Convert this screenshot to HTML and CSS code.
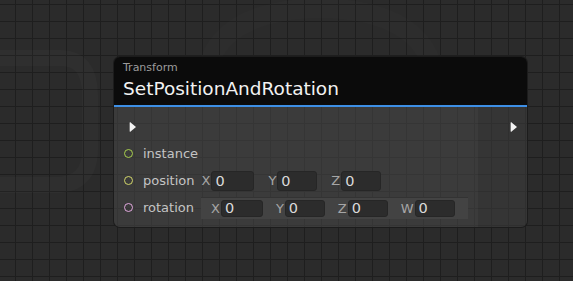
FILE: index.html
```html
<!DOCTYPE html>
<html lang="en">
<head>
    <meta charset="UTF-8">
    <title>SetPositionAndRotation</title>
    <link rel="stylesheet" href="styles.css">
</head>
<body>

<div class="canvas">
    <svg class="watermark" width="573" height="281" viewBox="0 0 573 281">
        <path d="M-20 70 Q-20 58 0 58 L60 58 Q90 58 90 95 L90 150 Q90 185 55 185 L-20 185 Z" fill="none" stroke="#ffffff" stroke-width="16" stroke-opacity="0.018"/>
        <path d="M210 60 Q230 10 320 8 Q410 10 430 60" fill="none" stroke="#ffffff" stroke-width="20" stroke-opacity="0.012"/>
    </svg>

    <div class="node">
        <div class="node-header">
            <div class="node-category">Transform</div>
            <div class="node-title">SetPositionAndRotation</div>
        </div>
        <div class="node-body">
            <div class="inputs">
                <div class="row">
                    <span class="flow-arrow"></span>
                </div>
                <div class="row">
                    <span class="port port-instance"></span>
                    <span class="label">instance</span>
                </div>
                <div class="row">
                    <span class="port port-position"></span>
                    <span class="label">position</span>
                    <div class="vector">
                        <span class="axis">X</span><span class="field wide">0</span>
                        <span class="axis">Y</span><span class="field">0</span>
                        <span class="axis">Z</span><span class="field">0</span>
                    </div>
                </div>
                <div class="row">
                    <span class="port port-rotation"></span>
                    <span class="label">rotation</span>
                    <div class="vector quat">
                        <span class="axis">X</span><span class="field wide">0</span>
                        <span class="axis">Y</span><span class="field">0</span>
                        <span class="axis">Z</span><span class="field">0</span>
                        <span class="axis">W</span><span class="field">0</span>
                    </div>
                </div>
            </div>
            <div class="outputs">
                <div class="row">
                    <span class="flow-arrow"></span>
                </div>
            </div>
        </div>
    </div>
</div>

</body>
</html>
```

FILE: styles.css
```css
body {
    margin: 0;
    padding: 0;
    font-family: "DejaVu Sans", Verdana, sans-serif;
    background-color: #2a2a2a;
    overflow: hidden;
}
.canvas {
    position: relative;
    width: 573px;
    height: 281px;
    background-color: #2b2b2b;
    background-image:
        linear-gradient(to right, #1e1e1e 1px, transparent 1px),
        linear-gradient(to bottom, #1e1e1e 1px, transparent 1px);
    background-size: 17px 17px;
    background-position: 15px 4px;
}
.watermark {
    position: absolute;
    left: 0;
    top: 0;
}
.node {
    position: absolute;
    left: 114px;
    top: 57px;
    width: 413px;
    border-radius: 6px;
    overflow: hidden;
    box-shadow: 0 0 0 1px #1c1c1c;
}
.node-header {
    background-color: #0b0b0b;
    height: 50px;
    padding: 4px 9px 0;
    box-sizing: border-box;
    border-bottom: 2px solid #3d8fe6;
}
.node-category {
    font-size: 11px;
    color: #9b9b9b;
    line-height: 13px;
}
.node-title {
    font-size: 18.5px;
    color: #f2f2f2;
    line-height: 24px;
    margin-top: 3px;
}
.node-body {
    display: flex;
    height: 120px;
    background-color: rgba(72, 72, 72, 0.55);
}
.inputs {
    flex: 1;
    padding: 6px 0 0 9px;
}
.outputs {
    width: 49px;
    padding-top: 6px;
    background-color: rgba(0, 0, 0, 0.1);
}
.outputs .row {
    padding-left: 26px;
}
.row {
    display: flex;
    align-items: center;
    height: 27px;
}
.flow-arrow {
    width: 0;
    height: 0;
    margin-left: 7px;
    border-top: 5.5px solid transparent;
    border-bottom: 5.5px solid transparent;
    border-left: 6px solid #f2f2f2;
    filter: drop-shadow(-1px 0 0 #777777);
}
.port {
    width: 7px;
    height: 7px;
    margin-left: 1px;
    border-radius: 50%;
    border: 1.5px solid;
}
.port-instance {
    border-color: #a8cf4e;
}
.port-position {
    border-color: #d2d66a;
}
.port-rotation {
    border-color: #e2a8df;
}
.label {
    margin-left: 10px;
    font-size: 13px;
    color: #c4c4c4;
}
.vector {
    display: flex;
    align-items: center;
    margin-left: 7px;
}
.axis {
    font-size: 13px;
    color: #a6a6a6;
    margin-right: 1px;
    margin-left: 14px;
}
.axis:first-child {
    margin-left: 0;
}
.field {
    width: 40px;
    height: 20px;
    box-sizing: border-box;
    padding-left: 3px;
    background-color: #2c2c2c;
    border: 1px solid #262626;
    border-radius: 3px;
    font-size: 14.5px;
    line-height: 18px;
    color: #dadada;
}
.field.wide {
    width: 43px;
}
.quat {
    height: 22px;
    padding: 0 13px 0 10px;
    background-color: #434343;
    border-top: 1px solid #333333;
    box-sizing: border-box;
}
.quat .field {
    height: 17px;
    line-height: 15px;
}
.quat .field.wide {
    width: 42px;
}
.quat .axis {
    margin-left: 13px;
}
.quat .axis:first-child {
    margin-left: 0;
}
```
